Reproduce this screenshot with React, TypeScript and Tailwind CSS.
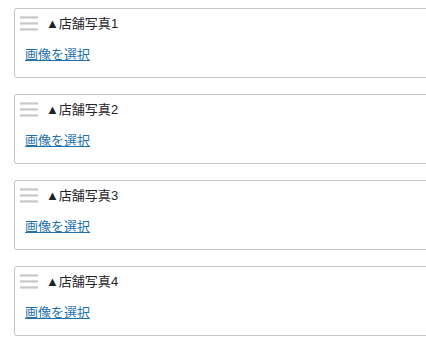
const items = [1, 2, 3, 4];

function Handle() {
  return (
    <div className="flex w-[18px] flex-col gap-[3px]">
      {[0, 1, 2].map((i) => (
        <span
          key={i}
          className="block h-[3px] w-full bg-gradient-to-b from-[#e2e2e2] via-[#c8c8c8] to-[#ececec]"
        />
      ))}
    </div>
  );
}

export default function App() {
  return (
    <div
      className="min-h-screen overflow-hidden bg-white pt-[8px] pl-[14px]"
      style={{ fontFamily: '"Liberation Sans", "Noto Sans CJK JP", sans-serif' }}
    >
      <div className="flex w-[440px] flex-col gap-[16px]">
        {items.map((n) => (
          <div key={n} className="rounded-[3px] border border-[#c3c4c7] bg-white">
            <div className="flex h-[29px] items-center gap-[8px] pl-[5px]">
              <Handle />
              <span className="text-[13px] text-[#1d2327]">▲店舗写真{n}</span>
            </div>
            <div className="pt-[7px] pb-[12px] pl-[10px] text-[13px] leading-[20px]">
              <a href="#" className="text-[#2271b1] underline">
                画像を選択
              </a>
            </div>
          </div>
        ))}
      </div>
    </div>
  );
}
